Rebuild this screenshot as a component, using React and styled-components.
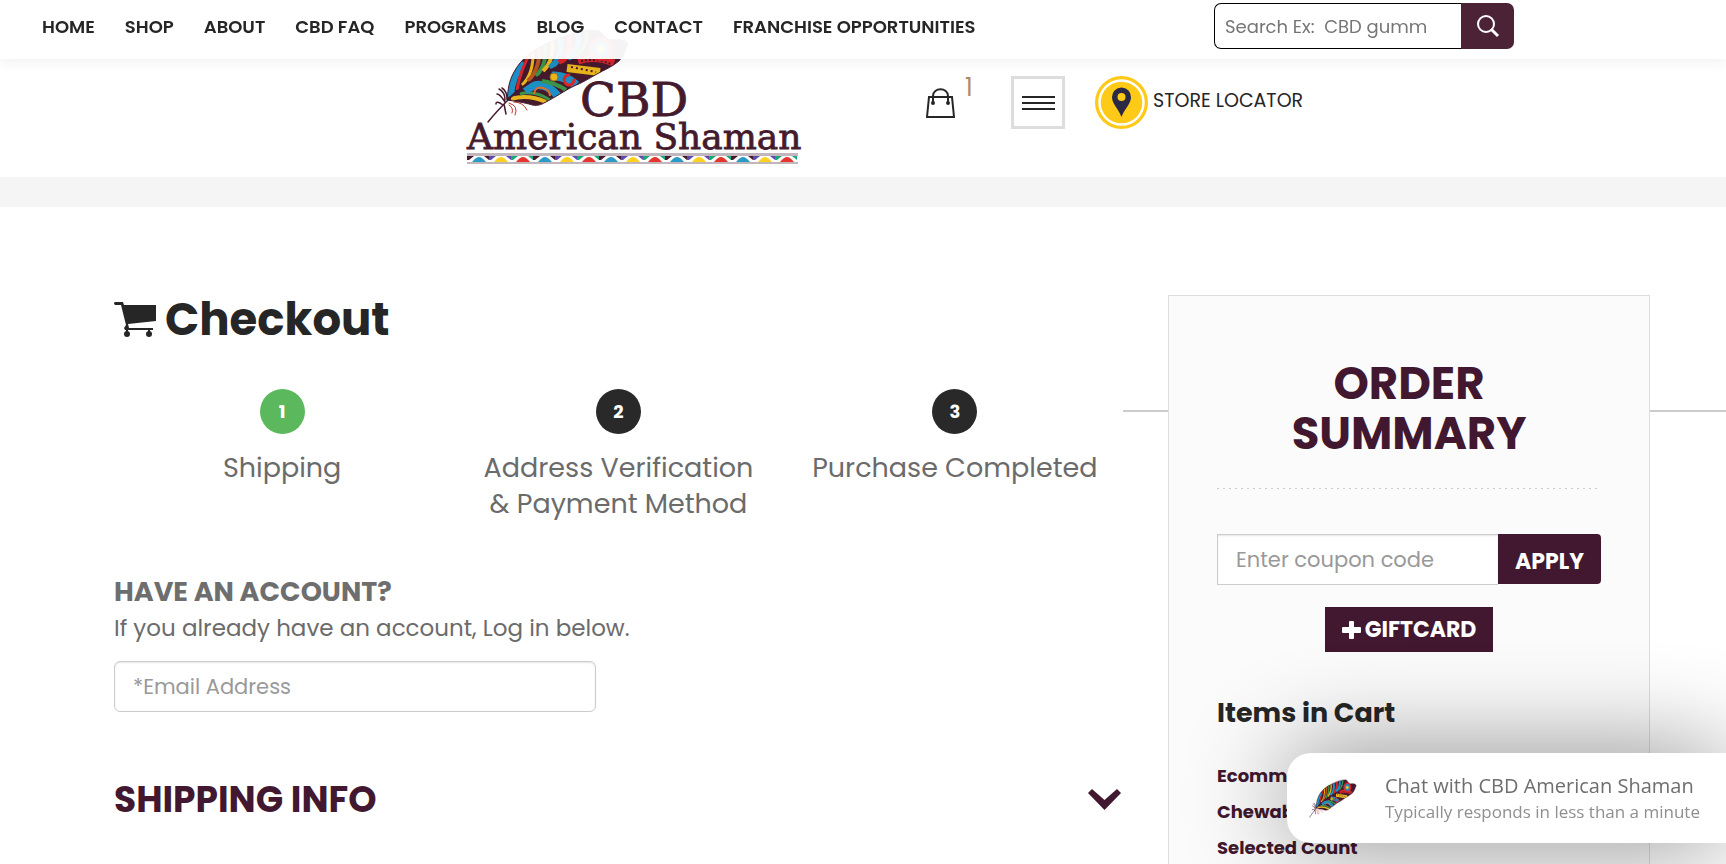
import React, { useState } from "react";
import styled, { createGlobalStyle } from "styled-components";

const GlobalStyle = createGlobalStyle`
  * {
    box-sizing: border-box;
  }
  body {
    margin: 0;
    color: #6b6b6b;
    background-color: #fff;
    font-family: Poppins, Inter, "Liberation Sans", sans-serif;
    font-size: 18px;
  }
  button,
  input {
    font-family: inherit;
  }
`;

const TopBar = styled.div`
  position: fixed;
  top: 0;
  left: 0;
  right: 0;
  z-index: 10;
  display: flex;
  align-items: center;
  justify-content: space-between;
  padding: 3px 212px 10px 42px;
  background-color: rgba(255, 255, 255, 0.95);
  box-shadow: 0 5px 12px rgba(0, 0, 0, 0.05);
`;

const Nav = styled.nav`
  display: flex;
  gap: 30px;
`;

const NavLink = styled.a`
  color: #262626;
  font-size: 18px;
  font-weight: 600;
  text-decoration: none;
  white-space: nowrap;
`;

const SearchForm = styled.form`
  display: flex;
  width: 300px;
  height: 46px;
`;

const SearchInput = styled.input`
  flex: 1;
  min-width: 0;
  padding: 0 10px;
  border: 1px solid #000;
  border-right: none;
  border-radius: 7px 0 0 7px;
  font-size: 18px;
  background-color: #fff;
  &::placeholder {
    color: #757575;
  }
`;

const SearchButton = styled.button`
  display: flex;
  align-items: center;
  justify-content: center;
  width: 53px;
  border: none;
  border-radius: 0 7px 7px 0;
  color: #fff;
  background-color: #4c2236;
  cursor: pointer;
`;

const Header = styled.header`
  display: flex;
  align-items: center;
  gap: 120px;
  padding: 30px 0 13px 27%;
  border-bottom: 30px solid #f5f5f5;
`;

const LogoLink = styled.a`
  display: flex;
`;

const HeaderActions = styled.div`
  display: flex;
  align-items: center;
  gap: 30px;
  padding-top: 11px;
`;

const CartLink = styled.a`
  display: flex;
  gap: 10px;
  width: 55px;
  color: #262626;
  text-decoration: none;
`;

const CartCount = styled.sup`
  color: #b5876a;
  font-size: 24px;
  font-weight: 400;
  line-height: 1;
  margin-top: -12px;
`;

const MenuButton = styled.button`
  display: flex;
  flex-direction: column;
  align-items: center;
  justify-content: center;
  gap: 4px;
  width: 54px;
  height: 53px;
  padding: 0;
  border: 3px solid #ddd;
  background: none;
  cursor: pointer;
`;

const MenuLine = styled.span`
  width: 33px;
  height: 2px;
  background-color: #262626;
`;

const StoreLink = styled.a`
  display: flex;
  align-items: center;
  gap: 5px;
  color: #262626;
  text-decoration: none;
  white-space: nowrap;
`;

const StoreText = styled.span`
  padding-bottom: 4px;
  font-size: 19px;
`;

const Page = styled.main`
  display: grid;
  grid-template-columns: minmax(0, 1009fr) minmax(0, 482fr);
  gap: 45px;
  align-items: start;
  padding: 88px 76px 0 114px;
  overflow: hidden;
`;

const Content = styled.div`
  display: flex;
  flex-direction: column;
`;

const Title = styled.h1`
  display: flex;
  align-items: center;
  gap: 8px;
  margin: 0 0 44px;
  color: #262626;
  font-size: 45px;
  font-weight: 700;
  line-height: 50px;
`;

const Steps = styled.ol`
  position: relative;
  display: grid;
  grid-template-columns: repeat(3, 1fr);
  margin: 0 0 52px;
  padding: 0;
  list-style: none;
  &::after {
    content: "";
    position: absolute;
    top: 21px;
    left: 100%;
    width: 60%;
    height: 2px;
    background-color: #ccc;
  }
`;

const Step = styled.li`
  display: flex;
  flex-direction: column;
  align-items: center;
  gap: 16px;
  font-size: 27px;
  line-height: 36px;
  text-align: center;
`;

const StepNumber = styled.span`
  width: 45px;
  height: 45px;
  border-radius: 50%;
  color: #fff;
  background-color: ${(props) => (props.$active ? "#5cb85c" : "#292929")};
  font-size: 18px;
  font-weight: 700;
  line-height: 45px;
`;

const StepLabel = styled.span`
  width: 300px;
`;

const AccountTitle = styled.h3`
  margin: 0;
  color: #6e6e6e;
  font-size: 27px;
  font-weight: 700;
  line-height: 36px;
`;

const AccountLabel = styled.label`
  font-size: 23px;
  line-height: 36px;
  margin-bottom: 15px;
`;

const EmailInput = styled.input`
  width: 482px;
  max-width: 100%;
  height: 51px;
  padding: 0 18px;
  border: 1px solid #ccc;
  border-radius: 6px;
  font-size: 21px;
  box-shadow: inset 0 1px 2px rgba(0, 0, 0, 0.1);
  &::placeholder {
    color: #999;
  }
`;

const SectionToggle = styled.button`
  display: flex;
  align-items: center;
  justify-content: space-between;
  margin-top: 63px;
  padding: 0;
  border: none;
  background: none;
  color: #41182f;
  font-size: 36px;
  font-weight: 700;
  line-height: 50px;
  cursor: pointer;
`;

const Summary = styled.aside`
  position: relative;
  z-index: 1;
  min-height: calc(100vh - 295px);
  padding: 63px 48px 0;
  border: 1px solid #ddd;
  border-bottom: none;
  background-color: #fbfbfb;
`;

const SummaryTitle = styled.h2`
  margin: 0;
  padding: 0 60px 30px;
  background: repeating-linear-gradient(to right, #ccc 0 2px, transparent 2px 6px)
    bottom / 100% 1px no-repeat;
  color: #41182f;
  font-size: 45px;
  font-weight: 700;
  line-height: 50px;
  text-align: center;
`;

const CouponForm = styled.form`
  display: flex;
  margin-top: 45px;
`;

const CouponInput = styled.input`
  flex: 1;
  min-width: 0;
  height: 51px;
  padding: 0 18px;
  border: 1px solid #ccc;
  border-right: none;
  font-size: 21px;
  background-color: #fff;
  box-shadow: inset 0 1px 2px rgba(0, 0, 0, 0.1);
  &::placeholder {
    color: #999;
  }
`;

const ApplyButton = styled.button`
  width: 103px;
  height: 50px;
  padding: 5px 0 0;
  border: none;
  border-radius: 0 4px 4px 0;
  color: #fff;
  background-color: #41182f;
  font-size: 22px;
  font-weight: 700;
  cursor: pointer;
`;

const GiftButton = styled.button`
  display: flex;
  align-items: center;
  justify-content: center;
  gap: 4px;
  width: 168px;
  height: 45px;
  margin: 22px auto 0;
  padding: 0;
  border: none;
  color: #fff;
  background-color: #41182f;
  font-size: 22px;
  font-weight: 700;
  cursor: pointer;
`;

const CartTitle = styled.h3`
  margin: 43px 0 27px;
  color: #262626;
  font-size: 27px;
  font-weight: 700;
  line-height: 36px;
`;

const CartItem = styled.a`
  display: block;
  max-width: 150px;
  color: #41182f;
  font-size: 18px;
  font-weight: 700;
  line-height: 36px;
  text-decoration: none;
`;

const ChatButton = styled.button`
  position: fixed;
  right: 0;
  bottom: 21px;
  z-index: 20;
  display: flex;
  align-items: center;
  gap: 28px;
  width: 439px;
  height: 90px;
  padding: 0 22px;
  border: none;
  border-radius: 24px 0 0 24px;
  background-color: #fff;
  box-shadow: 0 0 100px rgba(0, 0, 0, 0.45);
  text-align: left;
  cursor: pointer;
`;

const ChatText = styled.span`
  display: flex;
  flex-direction: column;
  font-family: "Segoe UI", "Open Sans", sans-serif;
  white-space: nowrap;
`;

const ChatTitle = styled.span`
  color: #6e6e6e;
  font-size: 20px;
  line-height: 28px;
`;

const ChatNote = styled.span`
  color: #8f8f8f;
  font-size: 17px;
  line-height: 24px;
`;

const VANE =
  "M41 70C42 62 42 55 46 46C52 33 62 22 80 14C100 5 115 0 131 0C136 2 138 8 143 10C150 9 156 9 162 13C160 20 157 26 153 31C146 37 138 40 131 44C122 49 116 53 108 56C98 61 90 67 78 73C73 76 68 76 63 74C55 72 48 71 41 70Z";

const Feather = ({ id }) => (
  <g>
    <defs>
      <clipPath id={id}>
        <path d={VANE} />
      </clipPath>
    </defs>
    <g clipPath={`url(#${id})`} fill="none">
      <path d={VANE} fill="#451a2d" />
      <g strokeWidth="5">
        <path d="M44 67Q45 46 57 32" stroke="#1c8fc4" strokeWidth="8" />
        <path d="M51 60Q54 40 66 20" stroke="#d8262b" strokeWidth="3" />
        <path d="M56 55Q68 44 67 20" stroke="#e9b51c" strokeWidth="3" />
        <path d="M62 51Q75 38 73 16" stroke="#b4571f" strokeWidth="4" />
        <path d="M70 46Q82 34 79 12" stroke="#3b9447" strokeWidth="4" />
        <path d="M77 41Q89 30 86 8" stroke="#e9b51c" strokeWidth="4" />
        <path d="M84 38Q98 27 94 8" stroke="#1c8fc4" strokeWidth="6" />
        <path d="M93 33Q107 24 103 5" stroke="#d8262b" strokeWidth="6" />
        <path d="M102 29Q115 18 112 2" stroke="#1c8fc4" strokeWidth="6" />
        <path d="M110 25Q122 17 121 0" stroke="#3b9447" strokeWidth="4" />
        <path d="M45 69Q62 64 80 72" stroke="#e9b51c" strokeWidth="4" />
        <path d="M54 64Q68 60 84 70" stroke="#3b9447" strokeWidth="3" />
        <path d="M59 61Q75 47 92 66" stroke="#1c8fc4" strokeWidth="8" />
        <path d="M68 64Q69 56 77 58Q84 60 84 66" stroke="#e06c2a" strokeWidth="2" />
        <path d="M76 51Q90 53 100 60" stroke="#3b9447" strokeWidth="4" />
        <path d="M86 46Q99 45 110 55" stroke="#1c8fc4" strokeWidth="9" />
        <path d="M101 38L134 42" stroke="#e9b51c" strokeWidth="8" />
        <path d="M105 37L130 42" stroke="#451a2d" strokeWidth="2" strokeDasharray="2 3" />
        <path d="M112 31Q129 25 148 33" stroke="#d8262b" strokeWidth="7" />
        <path d="M115 31Q130 28 145 34" stroke="#451a2d" strokeWidth="2" strokeDasharray="2 2" />
      </g>
      <circle cx="88" cy="47" r="4" fill="#e9b51c" stroke="#9c721c" />
      <path d="M108 49A5 5 0 1 1 104 45" stroke="#d8262b" strokeWidth="3" />
      <circle cx="135" cy="19" r="12" fill="#d8262b" />
      <circle cx="135" cy="19" r="8" fill="#1c8fc4" />
      <circle cx="135" cy="19" r="4" fill="#f4c51c" />
      <path d="M41 70Q70 44 112 28" stroke="#451a2d" strokeWidth="2" />
    </g>
    <g fill="none" strokeLinecap="round">
      <path
        d="M22 92Q30 82 42 70M39 72Q34 64 31 64M39 70Q39 62 33 59M41 69Q41 61 36 58M37 75Q30 70 30 74M38 74L40 84"
        stroke="#451a2d"
        strokeWidth="1.5"
      />
      <path d="M43 73Q53 76 49 85M48 72Q57 72 61 80M43 75Q48 78 46 83" stroke="#c7302b" />
    </g>
    <path d={VANE} fill="none" stroke="#451a2d" />
  </g>
);

const triangleColors = ["#2c9ac6", "#ffd21f", "#e5352c"];
const gapColors = ["#451a2d", "#5d4ab0", "#19a974"];

const Logo = () => (
  <svg width="340" height="134" viewBox="0 0 340 134" role="img" aria-label="CBD American Shaman">
    <Feather id="logo-feather" />
    <g
      fill="#451a2d"
      stroke="#451a2d"
      strokeWidth="0.8"
      fontFamily="'Century Schoolbook', 'DejaVu Serif', serif"
    >
      <text x="114" y="86" fontSize="47">
        CBD
      </text>
      <text x="1" y="119" fontSize="36">
        American Shaman
      </text>
    </g>
    <rect x="1" y="123" width="331" height="11" fill="#c2b6bd" />
    <rect x="1" y="126" width="331" height="6" fill="#fff" />
    {Array.from({ length: 15 }, (_, i) => (
      <g key={i} transform={`translate(${i * 22 + 2} 126)`}>
        <path d="M-1 0H6L1 4H-1ZM16 0H21V4Z" fill={gapColors[i % 3]} />
        <path d="M4 6Q8 1 11 1Q14 1 18 6Z" fill={triangleColors[i % 3]} />
      </g>
    ))}
  </svg>
);

const SearchIcon = () => (
  <svg width="24" height="24" viewBox="0 0 24 24" fill="none" stroke="currentColor" strokeWidth="2">
    <circle cx="10" cy="10" r="8" />
    <path d="M15 15L22 22" strokeWidth="3" />
  </svg>
);

const BagIcon = () => (
  <svg width="29" height="30" viewBox="0 0 29 30" fill="none" stroke="currentColor" strokeWidth="2">
    <path d="M3 9H26L28 29H1Z" />
    <path d="M7 15V8C7 -1 22 -1 22 8V15" />
    <circle cx="7" cy="15" r="1" />
    <circle cx="22" cy="15" r="1" />
  </svg>
);

const PinIcon = () => (
  <svg width="53" height="53" viewBox="0 0 53 53">
    <circle cx="26.5" cy="26.5" r="26.5" fill="#ffc917" />
    <circle cx="26.5" cy="26.5" r="22" fill="none" stroke="#fff" strokeWidth="2.5" />
    <path d="M26.5 41C23 32 17 28 17 21A9.5 9.5 0 0 1 36 21C36 28 30 32 26.5 41Z" fill="#2b2944" />
    <circle cx="26.5" cy="21" r="4" fill="#ffc917" />
  </svg>
);

const CartIcon = () => (
  <svg width="43" height="36" viewBox="0 0 43 36" fill="currentColor">
    <path d="M1 0H9L10 3H42V19L14 22L15 26H39V28H11L10 26L12 23L7 3H1Q-1 1 1 0Z" />
    <path d="M12 27H14V31H12ZM34 27H36V31H34Z" />
    <circle cx="13" cy="32" r="3" />
    <circle cx="35" cy="32" r="3" />
  </svg>
);

const ChevronIcon = () => (
  <svg width="35" height="22" viewBox="0 0 35 22" fill="currentColor">
    <path d="M0 4L4 0L16.5 11L29 0L33 4L16.5 21Z" />
  </svg>
);

const PlusIcon = () => (
  <svg width="19" height="18" viewBox="0 0 19 18" fill="currentColor">
    <rect x="7" y="0" width="5" height="18" rx="1" />
    <rect x="0" y="6" width="19" height="6" rx="1" />
  </svg>
);

const navItems = [
  "HOME",
  "SHOP",
  "ABOUT",
  "CBD FAQ",
  "PROGRAMS",
  "BLOG",
  "CONTACT",
  "FRANCHISE OPPORTUNITIES",
];

const steps = [
  "Shipping",
  "Address Verification &\u00a0Payment Method",
  "Purchase Completed",
];

const App = () => {
  const [search, setSearch] = useState("");
  const [email, setEmail] = useState("");
  const [coupon, setCoupon] = useState("");

  return (
    <>
      <GlobalStyle />
      <TopBar>
        <Nav>
          {navItems.map((item) => (
            <NavLink href="#" key={item}>
              {item}
            </NavLink>
          ))}
        </Nav>
        <SearchForm onSubmit={(e) => e.preventDefault()}>
          <SearchInput
            aria-label="Search"
            placeholder="Search Ex:  CBD gumm"
            value={search}
            onChange={(e) => setSearch(e.target.value)}
          />
          <SearchButton aria-label="Search">
            <SearchIcon />
          </SearchButton>
        </SearchForm>
      </TopBar>
      <Header>
        <LogoLink href="#">
          <Logo />
        </LogoLink>
        <HeaderActions>
          <CartLink href="#" aria-label="Cart">
            <BagIcon />
            <CartCount>1</CartCount>
          </CartLink>
          <MenuButton aria-label="Menu">
            <MenuLine />
            <MenuLine />
            <MenuLine />
          </MenuButton>
          <StoreLink href="#">
            <PinIcon />
            <StoreText>STORE LOCATOR</StoreText>
          </StoreLink>
        </HeaderActions>
      </Header>
      <Page>
        <Content>
          <Title>
            <CartIcon />
            Checkout
          </Title>
          <Steps>
            {steps.map((step, index) => (
              <Step key={step}>
                <StepNumber $active={index === 0}>{index + 1}</StepNumber>
                <StepLabel>{step}</StepLabel>
              </Step>
            ))}
          </Steps>
          <AccountTitle>HAVE AN ACCOUNT?</AccountTitle>
          <AccountLabel htmlFor="email">
            If you already have an account, Log in below.
          </AccountLabel>
          <EmailInput
            id="email"
            type="email"
            placeholder="*Email Address"
            value={email}
            onChange={(e) => setEmail(e.target.value)}
          />
          <SectionToggle>
            SHIPPING INFO
            <ChevronIcon />
          </SectionToggle>
        </Content>
        <Summary>
          <SummaryTitle>ORDER SUMMARY</SummaryTitle>
          <CouponForm onSubmit={(e) => e.preventDefault()}>
            <CouponInput
              aria-label="Coupon code"
              placeholder="Enter coupon code"
              value={coupon}
              onChange={(e) => setCoupon(e.target.value)}
            />
            <ApplyButton>APPLY</ApplyButton>
          </CouponForm>
          <GiftButton>
            <PlusIcon />
            GIFTCARD
          </GiftButton>
          <CartTitle>Items in Cart</CartTitle>
          <CartItem href="#">Ecomm Chewable Selected Count</CartItem>
        </Summary>
      </Page>
      <ChatButton>
        <svg width="48" height="40" viewBox="20 -4 144 98" preserveAspectRatio="none" aria-hidden="true">
          <Feather id="chat-feather" />
        </svg>
        <ChatText>
          <ChatTitle>Chat with CBD American Shaman</ChatTitle>
          <ChatNote>Typically responds in less than a minute</ChatNote>
        </ChatText>
      </ChatButton>
    </>
  );
};

export default App;
